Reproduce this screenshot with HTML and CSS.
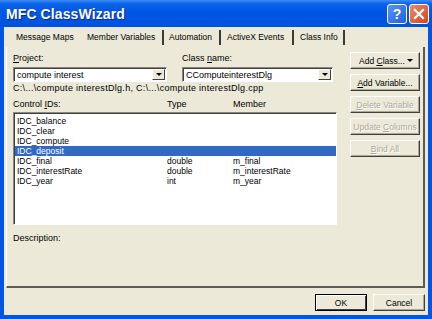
FILE: index.html
```html
<!DOCTYPE html>
<html lang="en">
<head>
    <meta charset="UTF-8">
    <title>MFC ClassWizard</title>
    <link rel="stylesheet" href="styles.css">
</head>
<body>

<div class="window">
    <div class="titlebar">
        <span class="title">MFC ClassWizard</span>
        <div class="caption-buttons">
            <span class="cap-btn help">?</span>
            <span class="cap-btn close">
                <svg width="12" height="12" viewBox="0 0 12 12">
                    <path d="M2 2 L10 10 M10 2 L2 10" stroke="#fff" stroke-width="2.2" stroke-linecap="square"/>
                </svg>
            </span>
        </div>
    </div>

    <div class="dialog">
        <!-- tab strip -->
        <div class="tabs">
            <span class="tab t-maps">Message Maps</span>
            <span class="tab t-vars">Member Variables</span>
            <span class="tab t-auto">Automation</span>
            <span class="tab t-activex">ActiveX Events</span>
            <span class="tab t-info">Class Info</span>
        </div>

        <div class="panel">
            <div class="left">
                <div class="combo-row">
                    <div class="field project">
                        <label><u>P</u>roject:</label>
                        <div class="combo">
                            <span>compute interest</span>
                            <span class="drop"><i></i></span>
                        </div>
                    </div>
                    <div class="field classname">
                        <label>Class <u>n</u>ame:</label>
                        <div class="combo">
                            <span>CComputeinterestDlg</span>
                            <span class="drop"><i></i></span>
                        </div>
                    </div>
                </div>

                <div class="path">C:\...\compute interestDlg.h, C:\...\compute interestDlg.cpp</div>

                <div class="cols header">
                    <span>Control <u>I</u>Ds:</span>
                    <span>Type</span>
                    <span>Member</span>
                </div>

                <div class="listbox">
                    <div class="row"><span>IDC_balance</span><span></span><span></span></div>
                    <div class="row"><span>IDC_clear</span><span></span><span></span></div>
                    <div class="row"><span>IDC_compute</span><span></span><span></span></div>
                    <div class="row selected"><span>IDC_deposit</span><span></span><span></span></div>
                    <div class="row"><span>IDC_final</span><span>double</span><span>m_final</span></div>
                    <div class="row"><span>IDC_interestRate</span><span>double</span><span>m_interestRate</span></div>
                    <div class="row"><span>IDC_year</span><span>int</span><span>m_year</span></div>
                </div>

                <div class="description">Description:</div>
            </div>

            <div class="right">
                <button class="btn dropdown"><span>Add <u>C</u>lass...</span> <i></i></button>
                <button class="btn"><span><u>A</u>dd Variable...</span></button>
                <button class="btn" disabled><span><u>D</u>elete Variable</span></button>
                <button class="btn" disabled><span>Update <u>C</u>olumns</span></button>
                <button class="btn" disabled><span><u>B</u>ind All</span></button>
            </div>
        </div>

        <div class="footer">
            <button class="btn default"><span>OK</span></button>
            <button class="btn"><span>Cancel</span></button>
        </div>
    </div>
</div>

</body>
</html>
```

FILE: styles.css
```css
/* window frame */
body {
    margin: 0;
    font-family: "Liberation Sans", Arial, sans-serif;
    font-size: 9px;
    color: #000;
}

.window {
    width: 432px;
    height: 319px;
    background: #0055e5;
    display: flex;
    flex-direction: column;
}

.titlebar {
    height: 27px;
    display: flex;
    align-items: center;
    justify-content: space-between;
    padding: 0 3px 0 6px;
    background: linear-gradient(#3a8cf7 0, #0a61e6 4px, #0057e6 45%, #0052dd 100%);
}

.title {
    color: #fff;
    font-weight: bold;
    font-size: 14px;
    letter-spacing: 0.1px;
    text-shadow: 1px 1px #0a2a8a;
}

.caption-buttons {
    display: flex;
    gap: 2px;
}

.cap-btn {
    width: 18px;
    height: 18px;
    border: 1px solid #fff;
    border-radius: 3px;
    display: flex;
    align-items: center;
    justify-content: center;
}

.help {
    background: linear-gradient(135deg, #5d95f5, #1e5fe0);
    color: #fff;
    font-weight: bold;
    font-size: 14px;
}

.close {
    background: linear-gradient(135deg, #ec8a6c, #d2461f);
}

.dialog {
    flex: 1;
    margin: 0 4px 4px 4px;
    background: #ece9d8;
    display: flex;
    flex-direction: column;
}

/* tabs */
.tabs {
    height: 20px;
    display: flex;
    align-items: center;
    padding-left: 6px;
    font-size: 8.5px;
}

.tab {
    height: 15px;
    line-height: 15px;
    box-sizing: border-box;
    white-space: nowrap;
    overflow: hidden;
    border-right: 2px solid #3b3a35;
}

.t-maps { width: 72px; padding-left: 6px; border-right: none; }
.t-vars { width: 82px; padding-left: 5px; }
.t-auto { width: 57px; padding-left: 5px; }
.t-activex { width: 73px; padding-left: 6px; }
.t-info { width: 51px; padding-left: 6px; }

.panel {
    height: 241px;
    margin: 0 3px 0 2px;
    border-left: 1px solid #fff;
    border-right: 2px solid #5e5c52;
    border-bottom: 2px solid #5e5c52;
    display: flex;
    padding: 5px 0 0 6px;
    box-sizing: border-box;
}

.left {
    width: 324px;
}

.combo-row {
    display: flex;
    gap: 15px;
}

.field label {
    display: block;
    height: 11px;
    line-height: 11px;
    margin: 1px 0 3px;
}

.project .combo { width: 154px; }
.classname .combo { width: 151px; }

.combo {
    height: 15px;
    box-sizing: border-box;
    background: #fff;
    border: 1px solid;
    border-color: #8a887e #fff #fff #8a887e;
    box-shadow: inset 1px 1px #404040;
    display: flex;
    align-items: center;
    justify-content: space-between;
    padding-left: 3px;
}

.drop {
    width: 13px;
    height: 11px;
    margin-right: 1px;
    background: #ece9d8;
    border: 1px solid;
    border-color: #fff #404040 #404040 #fff;
    box-sizing: border-box;
    display: flex;
    align-items: center;
    justify-content: center;
}

.drop i,
.dropdown i {
    width: 0;
    height: 0;
    border-left: 3px solid transparent;
    border-right: 3px solid transparent;
    border-top: 3px solid #000;
}

.path {
    height: 11px;
    line-height: 11px;
    margin-top: 1px;
    letter-spacing: 0.3px;
}

.cols {
    display: grid;
    grid-template-columns: 154px 66px 1fr;
}

.header {
    height: 11px;
    line-height: 11px;
    margin-top: 5px;
}

.listbox {
    height: 113px;
    margin-top: 2px;
    box-sizing: border-box;
    background: #fff;
    border: 1px solid;
    border-color: #8a887e #fff #fff #8a887e;
    box-shadow: inset 1px 1px #404040;
    padding: 3px 0 0 1px;
    font-size: 8.5px;
}

.row {
    display: grid;
    grid-template-columns: 150px 66px 1fr;
    height: 10px;
    line-height: 10px;
    padding-left: 2px;
}

.row.selected {
    background: #316ac5;
    color: #fff;
}

.description {
    margin-top: 8px;
    height: 11px;
    line-height: 11px;
}

/* push buttons */
.right {
    margin-left: 13px;
    display: flex;
    flex-direction: column;
    gap: 5px;
}

.btn {
    width: 70px;
    height: 17px;
    padding: 0;
    font-family: "Liberation Sans", Arial, sans-serif;
    font-size: 8.5px;
    color: #000;
    background: #ece9d8;
    border: 1px solid;
    border-color: #fff #404040 #404040 #fff;
    box-shadow: inset -1px -1px #aca899;
    display: flex;
    align-items: center;
    justify-content: center;
    white-space: nowrap;
}

.btn:disabled {
    color: #aca899;
    text-shadow: 1px 1px #fff;
}

.btn.dropdown {
    justify-content: space-between;
    padding: 0 6px 0 8px;
}

.footer {
    flex: 1;
    display: flex;
    justify-content: flex-end;
    align-items: flex-start;
    gap: 6px;
    padding: 6px 3px 0 0;
}

.footer .btn {
    width: 52px;
    height: 17px;
}

.btn.default {
    border: 1px solid #000;
    box-shadow: inset 1px 1px #fff, inset -1px -1px #404040;
}
```
